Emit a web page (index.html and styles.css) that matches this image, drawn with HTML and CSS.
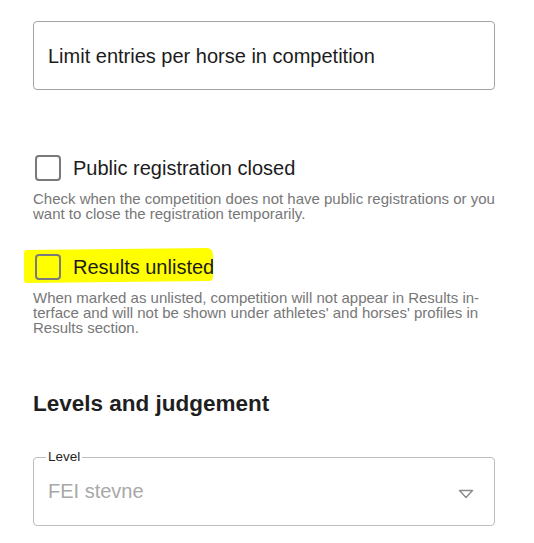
FILE: index.html
```html
<!DOCTYPE html>
<html>
<head>
<meta charset="utf-8">
<link rel="stylesheet" href="styles.css">
</head>
<body>
<div class="page">
  <div class="field">
    <span class="field-text">Limit entries per horse in competition</span>
  </div>

  <div class="check-group first">
    <label class="check-row">
      <span class="box"></span>
      <span class="check-label">Public registration closed</span>
    </label>
    <p class="help">Check when the competition does not have public registrations or you want to close the registration temporarily.</p>
  </div>

  <div class="check-group second">
    <label class="check-row">
      <span class="marker"></span>
      <span class="box"></span>
      <span class="check-label">Results unlisted</span>
    </label>
    <p class="help">When marked as unlisted, competition will not appear in Results in-<br>terface and will not be shown under athletes' and horses' profiles in Results section.</p>
  </div>

  <h2 class="heading">Levels and judgement</h2>

  <fieldset class="select">
    <legend class="select-legend">Level</legend>
    <span class="select-value">FEI stevne</span>
    <svg class="caret" width="16" height="10" viewBox="0 0 16 10"><path d="M1.5 1.5 H14.5 L8 8.5 Z" fill="none" stroke="#8a8a8a" stroke-width="1.4" stroke-linejoin="round"/></svg>
  </fieldset>
</div>
</body>
</html>
```

FILE: styles.css
```css
* { box-sizing: border-box; }
html, body { margin: 0; padding: 0; background: #fff; }
body { font-family: "Liberation Sans", Arial, sans-serif; color: #1c1c1c; }
.page { padding: 21px 0 0 33px; width: 495px; }

.field {
  height: 69px;
  border: 1px solid #a3a3a3;
  border-radius: 4px;
  display: flex;
  align-items: center;
  padding: 0 14px;
}
.field-text { font-size: 20px; line-height: 24px; }

.check-group.first { margin-top: 65px; }
.check-group.second { margin-top: 33px; }

.check-row {
  display: flex;
  align-items: center;
  position: relative;
  padding-left: 2px;
  height: 26px;
}
.box {
  width: 26px; height: 26px;
  border: 2px solid #7a7a7a;
  border-radius: 4px;
  flex: none;
  position: relative;
}
.check-label { margin-left: 12px; font-size: 20px; line-height: 24px; position: relative; }
.marker {
  position: absolute;
  left: -9px; top: -5px;
  width: 189px; height: 33px;
  background: #ffff00;
  border-radius: 3px 6px 4px 3px;
  transform: skewY(-0.6deg);
}
.help {
  margin: 10px 0 0 0;
  font-size: 15px;
  line-height: 15px;
  color: #777;
}

.heading {
  margin: 56px 0 0 0;
  font-size: 22.5px;
  line-height: 26px;
  font-weight: bold;
  color: #1f1f1f;
}

.select {
  margin: 33px 0 0 0;
  height: 76px;
  border: 1px solid #bdbdbd;
  border-radius: 4px;
  padding: 0 20px 0 14px;
  display: flex;
  align-items: center;
  position: relative;
}
.select-legend {
  font-size: 13.5px;
  line-height: 14px;
  padding: 0 2px;
  margin-left: -2px;
  color: #1f1f1f;
}
.select-value { font-size: 20px; color: #a8a8a8; flex: 1; margin-top: -7px; }
.caret { flex: none; margin-top: -1px; }
```
